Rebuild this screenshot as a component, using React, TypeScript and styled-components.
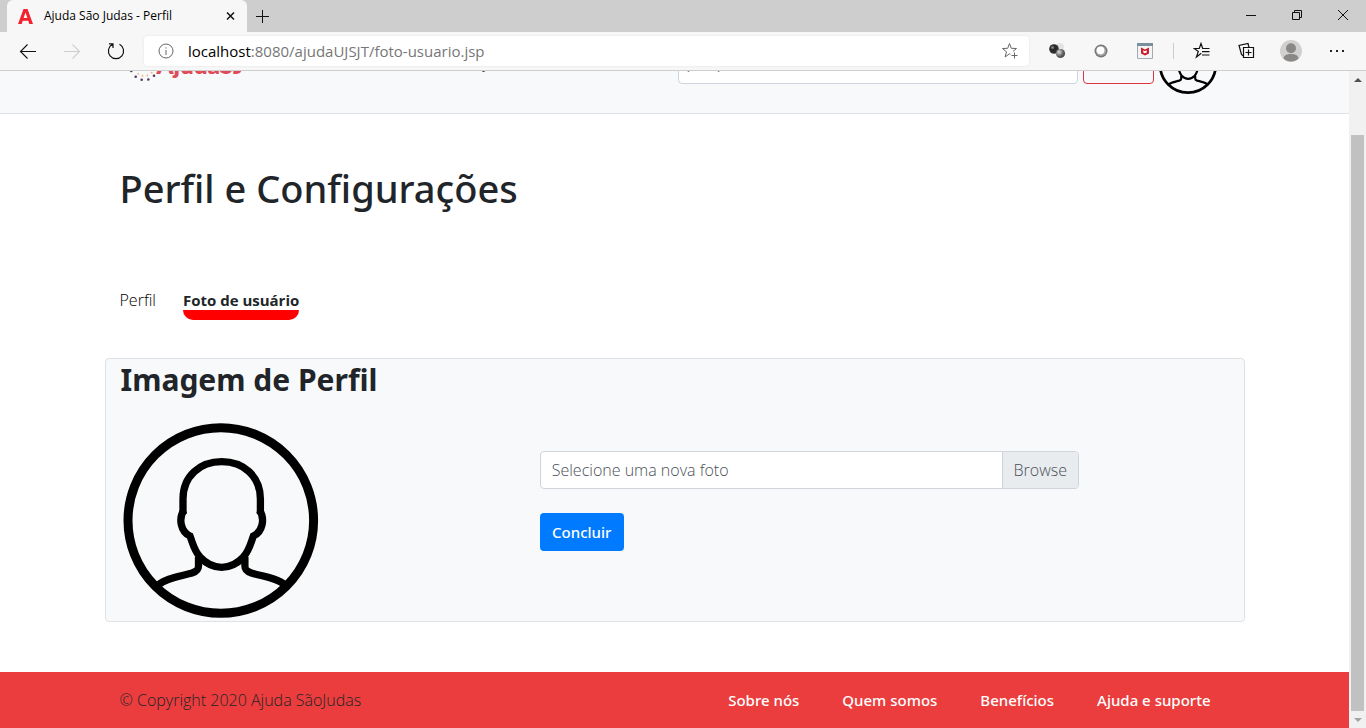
import React from "react";
import styled, { createGlobalStyle } from "styled-components";

const GlobalStyle = createGlobalStyle`
  *, *::before, *::after { box-sizing: border-box; }
  body { margin: 0; font-family: "Open Sans", "Noto Sans", sans-serif; color: #212529; background: #fff; }
  button, input { font: inherit; }
  h1, h2, ul { margin: 0; padding: 0; }
`;

/* ---------- browser window ---------- */

const Browser = styled.div`
  display: flex;
  flex-direction: column;
  height: 100vh;
  overflow: hidden;
`;

const TabStrip = styled.div`
  display: flex;
  flex: none;
  height: 32px;
  padding-left: 7px;
  background: #cecece;
`;

const BrowserTab = styled.div`
  display: flex;
  align-items: center;
  width: 240px;
  padding: 0 5px 0 11px;
  gap: 11px;
  background: #f7f7f7;
  border-radius: 6px 6px 0 0;
`;

const TabTitle = styled.span`
  flex: 1;
  font-size: 12px;
  line-height: 16px;
  color: #000;
  white-space: nowrap;
`;

const ChromeButton = styled.button<{ $width: number }>`
  display: flex;
  align-items: center;
  justify-content: center;
  flex: none;
  width: ${(p) => p.$width}px;
  padding: 0;
  border: 0;
  background: transparent;
  color: #111;
  &:disabled { color: #cfcfcf; }
`;

const WindowControls = styled.div`
  display: flex;
  height: 29px;
  margin-left: auto;
`;

const Toolbar = styled.div`
  display: flex;
  flex: none;
  align-items: stretch;
  height: 39px;
  padding: 0 6px;
  background: #f7f7f7;
  border-bottom: 1px solid #cecece;
`;

const AddressBar = styled.div`
  display: flex;
  flex: 1;
  align-items: center;
  margin: 4px 6px;
  background: #fff;
  border-radius: 4px;
  box-shadow: 0 0 3px rgba(0, 0, 0, 0.08);
`;

const Url = styled.span`
  flex: 1;
  font-size: 15px;
  line-height: 20px;
  color: #767676;
  b { font-weight: 400; color: #000; }
`;

const Divider = styled.span`
  align-self: center;
  width: 1px;
  height: 16px;
  margin: 0 6px;
  background: #cdcdcd;
`;

const Viewport = styled.div`
  display: flex;
  flex: 1;
  min-height: 0;
`;

const ScrollArea = styled.div`
  display: flex;
  flex: 1;
  flex-direction: column;
  justify-content: flex-end;
  min-width: 0;
  overflow: hidden;
`;

const Scrollbar = styled.div`
  display: flex;
  flex: none;
  flex-direction: column;
  width: 17px;
  background: #f1f1f1;
`;

const ScrollArrow = styled.div`
  display: flex;
  align-items: center;
  justify-content: center;
  height: 17px;
`;

const ScrollTrack = styled.div`
  display: flex;
  flex: 1;
  align-items: flex-end;
  padding: 0 2px;
`;

const ScrollThumb = styled.div`
  width: 100%;
  height: 92.5%;
  background: #c1c1c1;
`;

/* ---------- page ---------- */

const Header = styled.header`
  flex: none;
  background: #f8f9fa;
  border-bottom: 1px solid #dee2e6;
`;

const Container = styled.div`
  width: 100%;
  max-width: 1140px;
  margin: 0 auto;
`;

const HeaderRow = styled(Container)`
  display: flex;
  align-items: center;
  height: 95px;
  padding: 0 27px 2px 15px;
`;

const Brand = styled.a`
  display: flex;
  align-items: center;
  font-family: Lato, sans-serif;
  font-size: 24px;
  line-height: 30px;
  font-weight: 800;
  color: #e04a59;
  text-decoration: none;
`;

const NavLink = styled.a`
  margin-left: 202px;
  padding-bottom: 6px;
  font-size: 15px;
  line-height: 20px;
  color: #212529;
  text-decoration: none;
`;

const SearchForm = styled.form`
  display: flex;
  gap: 5px;
  margin: 0 4px 0 auto;
`;

const SearchInput = styled.input`
  width: 400px;
  height: 38px;
  padding: 0 8px 6px;
  font-size: 15px;
  border: 1px solid #ced4da;
  border-radius: 4px;
  background: #fff;
  &::placeholder { color: #6c757d; }
`;

const SearchButton = styled.button`
  width: 71px;
  height: 38px;
  padding: 0;
  color: #dc3545;
  background: transparent;
  border: 1px solid #dc3545;
  border-radius: 4px;
`;

const Main = styled.main`
  flex: 1 0 auto;
  padding: 50px 0;
`;

const PageTitle = styled.h1`
  padding: 0 15px;
  font-family: "Noto Sans", "Open Sans", sans-serif;
  font-size: 38px;
  line-height: 48px;
  font-weight: 500;
`;

const ProfileTabs = styled.nav`
  display: flex;
  align-items: flex-start;
  gap: 27px;
  margin: 78px 0 38px;
  padding: 0 15px;
`;

const ProfileTab = styled.a<{ $active?: boolean }>`
  font-size: ${(p) => (p.$active ? 15 : 16)}px;
  line-height: 20px;
  color: ${(p) => (p.$active ? "#212529" : "#000")};
  font-weight: ${(p) => (p.$active ? 700 : 300)};
  text-decoration: none;
  border-bottom: ${(p) => (p.$active ? "10px solid #f00" : "0")};
  border-radius: 0 0 10px 10px;
`;

const Card = styled.section`
  padding: 0 15px;
  background: #f8f9fa;
  border: 1px solid #dee2e6;
  border-radius: 4px;
`;

const CardTitle = styled.h2`
  margin-bottom: 20px;
  font-family: "Noto Sans", "Open Sans", sans-serif;
  font-size: 30px;
  line-height: 42px;
  font-weight: 700;
`;

const CardBody = styled.div`
  display: grid;
  grid-template-columns: 420fr 540fr 150fr;
`;

const PhotoForm = styled.form`
  display: flex;
  flex-direction: column;
  align-items: flex-start;
  gap: 24px;
  padding-top: 30px;
`;

const FileField = styled.div`
  display: grid;
  width: 100%;
  height: 38px;
  > * { grid-area: 1 / 1; }
`;

const FileInput = styled.input`
  width: 100%;
  height: 100%;
  margin: 0;
  opacity: 0;
`;

const FileLabel = styled.label`
  display: flex;
  align-items: stretch;
  justify-content: space-between;
  overflow: hidden;
  padding-left: 11px;
  font-size: 16px;
  line-height: 36px;
  font-weight: 300;
  color: #495057;
  background: #fff;
  border: 1px solid #ced4da;
  border-radius: 4px;
`;

const BrowseLabel = styled.span`
  width: 76px;
  text-align: center;
  background: #e9ecef;
  border-left: 1px solid #ced4da;
`;

const SubmitButton = styled.button`
  width: 84px;
  height: 38px;
  padding: 0;
  font-family: "Noto Sans", "Open Sans", sans-serif;
  font-size: 15px;
  font-weight: 500;
  color: #fff;
  background: #007bff;
  border: 0;
  border-radius: 4px;
`;

const Footer = styled.footer`
  flex: none;
  background: #eb3d3d;
`;

const FooterRow = styled(Container)`
  display: flex;
  align-items: center;
  justify-content: space-between;
  height: 56px;
  padding: 0 34px 0 15px;
  line-height: 24px;
`;

const Copyright = styled.span`
  font-size: 16px;
  font-weight: 300;
`;

const FooterLinks = styled.nav`
  display: flex;
  gap: 43px;
`;

const FooterLink = styled.a`
  font-family: "Noto Sans", "Open Sans", sans-serif;
  font-size: 15px;
  font-weight: 500;
  color: #fff;
  text-decoration: none;
`;

/* ---------- drawings ---------- */

const Person = ({ size }: { size: number }) => (
  <svg width={size} height={size} viewBox="1 0 200 200" fill="none" stroke="#000" strokeWidth="7.3" aria-hidden="true">
    <circle cx="100.8" cy="99.5" r="92.8" strokeWidth="9" />
    <path d="M63 93V78C63 55 80 40.700 101.700 40.700S140.400 55 140.400 78V93" />
    <path d="M64 89C58 98 61 111 70 115C73 123 74 129 80 136C86 142.500 93 146.300 101.700 146.300S117.400 142.500 123.400 136C129.400 129 130.400 123 133.400 115C142.400 111 145.400 98 139.400 89" />
    <path d="M78.500 136V145C78.500 149 76.500 150.500 72 152C60 155.500 46 157 38 164M124.900 136V145C124.900 149 126.900 150.500 131.400 152C143.400 155.500 157.400 157 165.400 164" />
  </svg>
);

const darkDots = [[11.300, 36], [15.700, 41.800], [21.700, 44.800], [28.300, 44.500], [34, 40.800], [9, 29], [11, 21], [16, 15], [24, 13], [32, 15]];
const lightDots = [[18.300, 38.800], [22.500, 40.800], [27.300, 40.500], [31.700, 37.800], [15, 34]];

const BrandMark = () => (
  <svg width="37" height="60" viewBox="0 0 37 60" aria-hidden="true">
    {darkDots.map(([x, y]) => <circle key={`${x}-${y}`} cx={x} cy={y} r="1.300" fill="#5b3560" />)}
    {lightDots.map(([x, y]) => <circle key={`${x}-${y}`} cx={x} cy={y} r="1" fill="#f6b98c" />)}
  </svg>
);

const Icon = ({ size = 20, width = 1.2, children }: { size?: number; width?: number; children: React.ReactNode }) => (
  <svg width={size} height={size} viewBox={`0 0 ${size} ${size}`} fill="none" stroke="currentColor" strokeWidth={width} aria-hidden="true">
    {children}
  </svg>
);

const Arrow = ({ flip }: { flip?: boolean }) => (
  <Icon width={1.1}>
    <path d={flip ? "M2 10.500H17.500M10.500 3.500L17.500 10.500L10.500 17.500" : "M18 10.500H2.500M9.500 3.500L2.500 10.500L9.500 17.500"} />
  </Icon>
);

export default function App() {
  return (
    <Browser>
      <GlobalStyle />
      <TabStrip>
        <BrowserTab>
          <svg width="15" height="16" viewBox="0 0 15 16" aria-hidden="true">
            <path fillRule="evenodd" fill="#f5222d" d="M5.500 1H9.500L15 16H11.300L10.300 12.800H4.700L3.700 16H0ZM7.500 4.500L5.600 10H9.400Z" />
          </svg>
          <TabTitle>Ajuda São Judas - Perfil</TabTitle>
          <ChromeButton $width={22} aria-label="Fechar aba">
            <Icon size={10} width={1.500}><path d="M1 1.500L8 8.500M8 1.500L1 8.500" /></Icon>
          </ChromeButton>
        </BrowserTab>
        <ChromeButton $width={30} aria-label="Nova aba">
          <Icon size={14} width={1}><path d="M7.500 1V14M1 7.500H14" /></Icon>
        </ChromeButton>
        <WindowControls>
          <ChromeButton $width={46} aria-label="Minimizar">
            <Icon size={10} width={1}><path d="M0 5.500H10" /></Icon>
          </ChromeButton>
          <ChromeButton $width={46} aria-label="Restaurar">
            <Icon size={10} width={1}><path d="M.5 2.500H7.500V9.500H.5ZM2.500 2.500V.5H9.500V7.500H7.500" /></Icon>
          </ChromeButton>
          <ChromeButton $width={46} aria-label="Fechar">
            <Icon size={10} width={1}><path d="M0 0L10 10M10 0L0 10" /></Icon>
          </ChromeButton>
        </WindowControls>
      </TabStrip>

      <Toolbar>
        <ChromeButton $width={44} aria-label="Voltar"><Arrow /></ChromeButton>
        <ChromeButton $width={44} aria-label="Avançar" disabled><Arrow flip /></ChromeButton>
        <ChromeButton $width={44} aria-label="Recarregar">
          <Icon width={1.2}><path d="M6.500 3.300A7.600 7.600 0 1 0 13.500 3.300M3 2.800H7V7" /></Icon>
        </ChromeButton>
        <AddressBar>
          <ChromeButton $width={44} aria-label="Informações do site">
            <Icon size={16} width={1}><circle cx="8" cy="8" r="7" stroke="#666" /><path stroke="#666" d="M8 7V12M8 4.300V5.600" /></Icon>
          </ChromeButton>
          <Url><b>localhost</b>:8080/ajudaUJSJT/foto-usuario.jsp</Url>
          <ChromeButton $width={38} aria-label="Adicionar aos favoritos">
            <Icon size={18} width={1}>
              <path stroke="#666" d="M9.500 12.300L8.500 11.800L4.100 15L5.500 9.800L1.500 6.500L6.700 6.300L8.500 1.500L10.300 6.300L15.500 6.500L12 9.400M13.500 10.500V16.500M10.500 13.500H16.500" />
            </Icon>
          </ChromeButton>
        </AddressBar>
        <ChromeButton $width={44} aria-label="Extensão 1">
          <svg width="18" height="16" viewBox="0 0 18 16">
            <defs>
              <radialGradient id="dark" cx=".35" cy=".35"><stop offset="0" stopColor="#999" /><stop offset=".5" stopColor="#222" /><stop offset="1" stopColor="#333" /></radialGradient>
              <radialGradient id="grey" cx=".35" cy=".35"><stop offset="0" stopColor="#ddd" /><stop offset="1" stopColor="#555" /></radialGradient>
            </defs>
            <circle cx="12" cy="4" r="4" fill="#e3e3e3" />
            <circle cx="6" cy="6" r="4.800" fill="url(#dark)" />
            <circle cx="12.500" cy="10.500" r="4.600" fill="url(#grey)" />
          </svg>
        </ChromeButton>
        <ChromeButton $width={44} aria-label="Extensão 2">
          <svg width="14" height="14" viewBox="0 0 14 14">
            <circle cx="7" cy="7" r="6.500" fill="#777" /><circle cx="7" cy="7" r="5" fill="#a8a8a8" /><circle cx="6.500" cy="6.300" r="3.900" fill="#fff" />
          </svg>
        </ChromeButton>
        <ChromeButton $width={44} aria-label="Extensão 3">
          <svg width="16" height="16" viewBox="0 0 16 16">
            <path d="M.5 1H15.500V15.500H.5Z" fill="#f4f4f6" stroke="#a3abb0" /><path d="M0 0H16V3H0Z" fill="#78909c" />
            <path d="M4 4.500L8 6.500L12 4.500V10.500L8 12.500L4 10.500Z" fill="#c9202b" /><path d="M6.300 7.300L8 8.200L9.700 7.300V9.500L8 10.300L6.300 9.500Z" fill="#fff" />
          </svg>
        </ChromeButton>
        <Divider />
        <ChromeButton $width={44} aria-label="Favoritos">
          <Icon size={18} width={1.2}>
            <path d="M8.300 11.300L3.400 15L5.300 9.500L1.200 6.500H6.300L8 1.500L9.700 6.500H16.500M9 9.700H16.500M9 13H16.500" />
          </Icon>
        </ChromeButton>
        <ChromeButton $width={44} aria-label="Coleções">
          <Icon size={18} width={1.2}>
            <path d="M6.500 5.500H16.500V15.500H6.500ZM11.500 7.500V13.500M8.500 10.500H14.500M4.500 12.500L2 3.500L11 1.500L12 5.500M6.500 14L4.500 12.500" />
          </Icon>
        </ChromeButton>
        <ChromeButton $width={46} aria-label="Conta">
          <svg width="22" height="22" viewBox="0 0 22 22">
            <circle cx="11" cy="11" r="11" fill="#d2d0ce" /><circle cx="11" cy="8.300" r="5" fill="#8a8886" />
            <path d="M3.500 18.500C4 15 7 14 11 14S18 15 18.500 18.500C14.500 22.500 7.500 22.500 3.500 18.500Z" fill="#8a8886" />
          </svg>
        </ChromeButton>
        <ChromeButton $width={46} aria-label="Mais opções">
          <svg width="16" height="4" viewBox="0 0 16 4"><path d="M1 1H3V3H1ZM7 1H9V3H7ZM13 1H15V3H13Z" fill="#222" /></svg>
        </ChromeButton>
      </Toolbar>

      <Viewport>
        <ScrollArea>
          <Header>
            <HeaderRow>
              <Brand href="#"><BrandMark />AjudaSJ</Brand>
              <NavLink href="#">Serviços</NavLink>
              <SearchForm>
                <SearchInput type="search" placeholder="pesquisar" aria-label="Pesquisar" />
                <SearchButton type="button" aria-label="Buscar" />
              </SearchForm>
              <Person size={60} />
            </HeaderRow>
          </Header>

          <Main>
            <Container>
              <PageTitle>Perfil e Configurações</PageTitle>
              <ProfileTabs>
                <ProfileTab href="#">Perfil</ProfileTab>
                <ProfileTab href="#" $active>Foto de usuário</ProfileTab>
              </ProfileTabs>
              <Card>
                <CardTitle>Imagem de Perfil</CardTitle>
                <CardBody>
                  <Person size={200} />
                  <PhotoForm>
                    <FileField>
                      <FileInput id="foto" type="file" />
                      <FileLabel htmlFor="foto">
                        Selecione uma nova foto
                        <BrowseLabel>Browse</BrowseLabel>
                      </FileLabel>
                    </FileField>
                    <SubmitButton type="button">Concluir</SubmitButton>
                  </PhotoForm>
                </CardBody>
              </Card>
            </Container>
          </Main>

          <Footer>
            <FooterRow>
              <Copyright>© Copyright 2020 Ajuda SãoJudas</Copyright>
              <FooterLinks>
                <FooterLink href="#">Sobre nós</FooterLink>
                <FooterLink href="#">Quem somos</FooterLink>
                <FooterLink href="#">Benefícios</FooterLink>
                <FooterLink href="#">Ajuda e suporte</FooterLink>
              </FooterLinks>
            </FooterRow>
          </Footer>
        </ScrollArea>
        <Scrollbar aria-hidden="true">
          <ScrollArrow><svg width="8" height="4"><path d="M0 4L4 0L8 4Z" fill="#505050" /></svg></ScrollArrow>
          <ScrollTrack><ScrollThumb /></ScrollTrack>
          <ScrollArrow><svg width="8" height="4"><path d="M0 0L4 4L8 0Z" fill="#a3a3a3" /></svg></ScrollArrow>
        </Scrollbar>
      </Viewport>
    </Browser>
  );
}
